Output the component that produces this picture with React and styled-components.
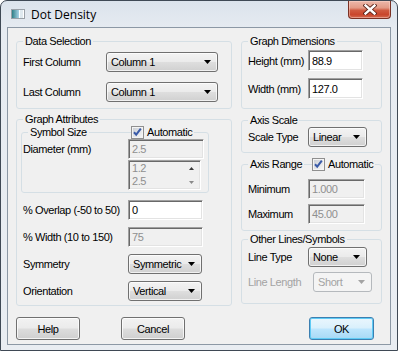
import React from 'react';
import styled, { createGlobalStyle, css } from 'styled-components';

const FONT = `"Liberation Sans", Arial, sans-serif`;

const Global = createGlobalStyle`
  html, body { margin: 0; padding: 0; background: #ffffff; }
  body { width: 398px; height: 351px; overflow: hidden; }
  *, *::before, *::after { box-sizing: border-box; }
`;

const Window = styled.div`
  width: 398px;
  height: 351px;
  display: flex;
  flex-direction: column;
  border: 1px solid #3f4955;
  border-radius: 7px 7px 0 0;
  background: linear-gradient(#dbe3ec, #e6ebf1 28px, #e9edf2);
  font-family: ${FONT};
  font-size: 11px;
  letter-spacing: -0.4px;
  color: #000;
  overflow: hidden;
`;

const TitleBar = styled.div`
  flex: none;
  height: 26px;
  display: flex;
  align-items: center;
  padding-left: 9px;
`;

const TitleText = styled.span`
  font-family: "Open Sans", "Liberation Sans", sans-serif;
  font-size: 12px;
  letter-spacing: 0;
  margin-left: 5px;
  color: #000;
`;

const CloseButton = styled.div`
  align-self: flex-start;
  margin-left: auto;
  margin-right: 6px;
  width: 43px;
  height: 18px;
  border: 1px solid #7a3124;
  border-top: none;
  border-radius: 0 0 4px 4px;
  background: linear-gradient(#ecb8aa 0%, #e39b87 40%, #d05a40 55%, #c9462c 80%, #d46a50 100%);
  box-shadow: inset 0 0 0 1px rgba(255, 220, 210, 0.45);
  display: flex;
  align-items: center;
  justify-content: center;
`;

const Client = styled.div`
  flex: 1;
  margin: 0 6px 5px 6px;
  border: 1px solid #8c98a5;
  background: #f0f0f0;
  display: flex;
  flex-direction: column;
  padding: 7px 8px 0 8px;
`;

const Columns = styled.div`
  display: grid;
  grid-template-columns: 216px 141px;
  column-gap: 9px;
  align-items: start;
`;

const Column = styled.div`
  display: flex;
  flex-direction: column;
`;

const Group = styled.fieldset`
  margin: ${p => p.$mt || 0}px 0 0 ${p => p.$ml || 0}px;
  padding: 0;
  border: 1px solid #d5dfe5;
  border-radius: 3px;
  height: ${p => p.$h}px;
  width: ${p => (p.$w ? `${p.$w}px` : 'auto')};
  min-width: 0;
`;

const Legend = styled.legend`
  position: relative;
  margin-left: 6px;
  padding: 0 2px;
  height: 13px;
  line-height: 13px;
  font-size: 11px;
  white-space: nowrap;
`;

const LegendCheck = styled.span`
  position: absolute;
  top: 0;
  left: ${p => p.$left}px;
  height: 13px;
  display: flex;
  align-items: center;
  gap: 3px;
  padding-right: 2px;
  background: #f0f0f0;
`;

const FieldGrid = styled.div`
  display: grid;
  grid-template-columns: ${p => p.$cols};
  row-gap: ${p => p.$gap || 0}px;
  align-items: center;
  padding: ${p => p.$pt || 0}px 0 0 ${p => p.$pl || 0}px;
  margin-top: ${p => p.$mt || 0}px;
`;

const Label = styled.span`
  white-space: nowrap;
  color: ${p => (p.$disabled ? '#a3a3a3' : '#000')};
`;

const Combo = styled.div`
  width: ${p => p.$w}px;
  height: 20px;
  margin-left: ${p => p.$shift || 0}px;
  border: 1px solid #707070;
  border-radius: 3px;
  background: linear-gradient(#f3f3f3 0%, #ebebeb 48%, #dedede 52%, #d0d0d0 100%);
  box-shadow: inset 0 0 0 1px rgba(255, 255, 255, 0.7);
  display: flex;
  align-items: center;
  justify-content: space-between;
  padding: 0 6px 0 4px;
  color: #000;
  ${p =>
    p.$disabled &&
    css`
      border-color: #b5b9bd;
      background: #f4f4f4;
      box-shadow: none;
      color: #a3a3a3;
    `}
`;

const TextBox = styled.div`
  width: ${p => p.$w}px;
  height: ${p => p.$h || 20}px;
  border: 1px solid;
  border-color: #a0a0a0 #ffffff #ffffff #a0a0a0;
  box-shadow: inset 1px 1px 0 #696969, inset -1px -1px 0 #e3e3e3;
  background: ${p => (p.$disabled ? '#f0f0f0' : '#ffffff')};
  color: ${p => (p.$disabled ? '#8f8f8f' : '#000')};
  display: flex;
  align-items: center;
  padding-left: 3px;
`;

const ListBox = styled.div`
  width: ${p => p.$w}px;
  height: ${p => p.$h}px;
  border: 1px solid;
  border-color: #a0a0a0 #ffffff #ffffff #a0a0a0;
  box-shadow: inset 1px 1px 0 #696969, inset -1px -1px 0 #e3e3e3;
  background: #f0f0f0;
  display: flex;
`;

const ListItems = styled.div`
  flex: 1;
  padding: 1px 0 0 3px;
  line-height: 13px;
  color: #8f8f8f;
`;

const ListScroll = styled.div`
  width: 16px;
  display: flex;
  flex-direction: column;
  justify-content: space-between;
  align-items: center;
  padding: 6px 2px 5px 0;
`;

const ButtonRow = styled.div`
  display: flex;
  margin-top: 11px;
  padding: 0 8px 0 0;
`;

const Button = styled.div`
  width: ${p => p.$w || 64}px;
  height: 23px;
  margin-left: ${p => (p.$push ? 'auto' : `${p.$ml || 0}px`)};
  border: 1px solid #707070;
  border-radius: 3px;
  background: linear-gradient(#f2f2f2 0%, #ebebeb 48%, #dddddd 52%, #cfcfcf 100%);
  box-shadow: inset 0 0 0 1px rgba(255, 255, 255, 0.75);
  display: flex;
  align-items: center;
  justify-content: center;
  font-size: 11px;
  ${p =>
    p.$default &&
    css`
      border-color: #3c7fb1;
      background: linear-gradient(#eaf6fd 0%, #d9f0fc 48%, #bee6fd 52%, #a7d9f5 100%);
      box-shadow: inset 0 0 0 1px #5fcbf5;
    `}
`;

const DownArrow = ({ color = '#000' }) => (
  <svg width="7" height="4" viewBox="0 0 7 4">
    <path d="M0 0 H7 L3.5 4 Z" fill={color} />
  </svg>
);

const SmallArrow = ({ up, color }) => (
  <svg width="5" height="3" viewBox="0 0 5 3">
    <path d={up ? 'M0 3 H5 L2.5 0 Z' : 'M0 0 H5 L2.5 3 Z'} fill={color} />
  </svg>
);

const CheckBox = () => (
  <svg width="13" height="13" viewBox="0 0 13 13">
    <defs>
      <linearGradient id="cbg" x1="0" y1="0" x2="1" y2="1">
        <stop offset="0" stopColor="#cbcfd5" />
        <stop offset="1" stopColor="#f6f6f6" />
      </linearGradient>
    </defs>
    <rect x="0.5" y="0.5" width="12" height="12" fill="#f4f4f4" stroke="#8f8f8f" />
    <rect x="2" y="2" width="9" height="9" fill="url(#cbg)" />
    <path d="M3 6.2 L5.2 8.6 L9.8 2.6" fill="none" stroke="#3a5ba8" strokeWidth="2" />
  </svg>
);

const TitleIcon = () => (
  <svg width="16" height="16" viewBox="0 0 16 16">
    <defs>
      <linearGradient id="tig" x1="0" y1="0" x2="1" y2="0">
        <stop offset="0" stopColor="#2f7f87" />
        <stop offset="1" stopColor="#a9d4e8" />
      </linearGradient>
    </defs>
    <rect x="1.5" y="3.5" width="13" height="9" fill="#ffffff" stroke="#9aa1a8" />
    <rect x="2" y="4" width="7" height="8" fill="url(#tig)" />
    <rect x="10" y="4" width="3" height="8" fill="#dfe9ef" />
  </svg>
);

const CloseGlyph = () => (
  <svg width="14" height="11" viewBox="0 0 14 11">
    <path d="M2.5 1.5 L11.5 9.5 M11.5 1.5 L2.5 9.5" stroke="#5a2218" strokeWidth="4.2" strokeLinecap="square" />
    <path d="M2.5 1.5 L11.5 9.5 M11.5 1.5 L2.5 9.5" stroke="#ffffff" strokeWidth="2.4" strokeLinecap="square" />
  </svg>
);

const Select = ({ w, value, disabled, shift }) => (
  <Combo $w={w} $disabled={disabled} $shift={shift}>
    <span>{value}</span>
    <DownArrow color={disabled ? '#a3a3a3' : '#000'} />
  </Combo>
);

export default function App() {
  return (
    <>
      <Global />
      <Window>
        <TitleBar>
          <TitleIcon />
          <TitleText>Dot Density</TitleText>
          <CloseButton>
            <CloseGlyph />
          </CloseButton>
        </TitleBar>
        <Client>
          <Columns>
            <Column>
              <Group $h={74}>
                <Legend>Data Selection</Legend>
                <FieldGrid $cols="83px 112px" $gap={10} $pt={4} $pl={6}>
                  <Label>First Column</Label>
                  <Select w={112} value="Column 1" />
                  <Label>Last Column</Label>
                  <Select w={112} value="Column 1" />
                </FieldGrid>
              </Group>
              <Group $h={193} $mt={4}>
                <Legend>Graph Attributes</Legend>
                <Group $h={67} $w={188} $ml={4}>
                  <Legend>
                    Symbol Size
                    <LegendCheck $left={103}>
                      <CheckBox />
                      Automatic
                    </LegendCheck>
                  </Legend>
                  <FieldGrid $cols="105px 76px" $gap={1} $pl={1}>
                    <Label>Diameter (mm)</Label>
                    <TextBox $w={76} $disabled>2.5</TextBox>
                    <span />
                    <ListBox $w={73} $h={30}>
                      <ListItems>
                        <div>1.2</div>
                        <div>2.5</div>
                      </ListItems>
                      <ListScroll>
                        <SmallArrow up color="#3a3a3a" />
                        <SmallArrow color="#8a8a8a" />
                      </ListScroll>
                    </ListBox>
                  </FieldGrid>
                </Group>
                <FieldGrid $cols="105px 76px" $gap={7} $pl={6} $mt={7}>
                  <Label>% Overlap (-50 to 50)</Label>
                  <TextBox $w={75}>0</TextBox>
                  <Label>% Width (10 to 150)</Label>
                  <TextBox $w={75} $disabled>75</TextBox>
                  <Label>Symmetry</Label>
                  <Select w={74} value="Symmetric" />
                  <Label>Orientation</Label>
                  <Select w={74} value="Vertical" />
                </FieldGrid>
              </Group>
            </Column>
            <Column>
              <Group $h={74}>
                <Legend>Graph Dimensions</Legend>
                <FieldGrid $cols="60px 55px" $gap={7} $pt={2} $pl={6}>
                  <Label>Height (mm)</Label>
                  <TextBox $w={55} $h={21}>88.9</TextBox>
                  <Label>Width (mm)</Label>
                  <TextBox $w={55} $h={21}>127.0</TextBox>
                </FieldGrid>
              </Group>
              <Group $h={39} $mt={5}>
                <Legend>Axis Scale</Legend>
                <FieldGrid $cols="60px 59px" $pl={6}>
                  <Label>Scale Type</Label>
                  <Select w={59} value="Linear" />
                </FieldGrid>
              </Group>
              <Group $h={73} $mt={5}>
                <Legend>
                  Axis Range
                  <LegendCheck $left={64}>
                    <CheckBox />
                    Automatic
                  </LegendCheck>
                </Legend>
                <FieldGrid $cols="60px 57px" $gap={5} $pt={8} $pl={6}>
                  <Label>Minimum</Label>
                  <TextBox $w={57} $disabled>1.000</TextBox>
                  <Label>Maximum</Label>
                  <TextBox $w={57} $disabled>45.00</TextBox>
                </FieldGrid>
              </Group>
              <Group $h={71} $mt={2}>
                <Legend>Other Lines/Symbols</Legend>
                <FieldGrid $cols="60px 64px" $gap={5} $pt={1} $pl={6}>
                  <Label>Line Type</Label>
                  <Select w={59} value="None" />
                  <Label $disabled>Line Length</Label>
                  <Select w={59} value="Short" disabled shift={5} />
                </FieldGrid>
              </Group>
            </Column>
          </Columns>
          <ButtonRow>
            <Button>Help</Button>
            <Button $ml={41}>Cancel</Button>
            <Button $push $default $w={65}>OK</Button>
          </ButtonRow>
        </Client>
      </Window>
    </>
  );
}
